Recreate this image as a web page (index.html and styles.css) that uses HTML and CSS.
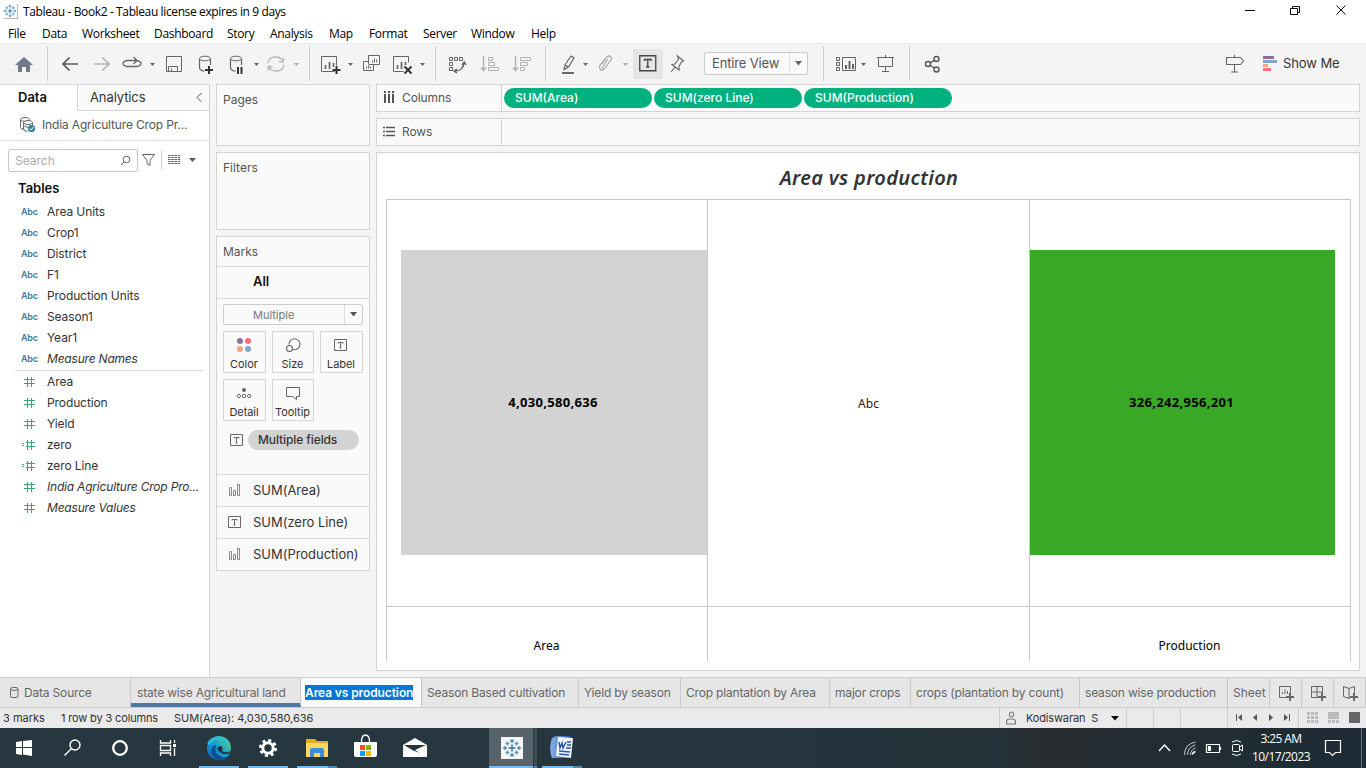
FILE: index.html
```html
<!DOCTYPE html>
<html lang="en">
<head>
<meta charset="utf-8">
<title>Tableau - Book2</title>
<link rel="stylesheet" href="styles.css">
</head>
<body>
<svg class="defs" width="0" height="0">
  <defs>
    <symbol id="tableau" viewBox="0 0 20 20"><g stroke-width="1.4"><path stroke="#2d739f" d="M10 6.500v7M6.500 10h7"/><path stroke="#4a8fbb" d="M10 1v4M8 3h4M10 15v4M8 17h4M3 8v4M1 10h4M17 8v4M15 10h4"/><path stroke="#5b9ac6" d="M5.500 3.500v4M3.500 5.500h4M14.500 3.500v4M12.500 5.500h4M5.500 12.500v4M3.500 14.500h4M14.500 12.500v4M12.500 14.500h4"/></g></symbol>
    <symbol id="hash" viewBox="0 0 14 12"><path d="M5.500 1v10M9.500 1v10M2 3.500h11M2 7.500h11" stroke="#3fa67a" stroke-width="1.100" fill="none"/></symbol>
    <symbol id="calc" viewBox="0 0 14 12"><path d="M5.500 1v10M9.500 1v10M4 3.500h9M4 7.500h9M-1 4.500h3M-1 6.500h3" stroke="#3fa67a" stroke-width="1.100" fill="none"/></symbol>
    <symbol id="tbox" viewBox="0 0 14 12"><path d="M.5.5h12v11H.5zM4 4.500V3.500h5v1M6.500 3.500v5.500M5.500 9h2" stroke="#666" fill="none"/></symbol>
    <symbol id="bars" viewBox="0 0 14 12"><path d="M1.500 3.500h2v8h-2zM5.500 6.500h2v5h-2zM9.500.5h2v11h-2z" stroke="#8a8a8a" fill="none"/></symbol>
  </defs>
</svg>
<div class="window">
  <header class="titlebar">
    <span class="appicon"><svg width="14" height="14"><use href="#tableau"/></svg></span>
    <span class="apptitle">Tableau - Book2 - Tableau license expires in 9 days</span>
    <svg class="winbtns" width="128" height="24" viewBox="1238 0 128 24"><path d="M1245 10.500h10M1290.500 8.500h7v6h-7zM1292.500 8V6.500h7v6h-2M1336.500 5.500l9 9M1345.500 5.500l-9 9" stroke="#000" fill="none"/></svg>
  </header>
  <nav class="menubar">
    <span class="m1">File</span><span class="m2">Data</span><span class="m3">Worksheet</span><span class="m4">Dashboard</span><span class="m5">Story</span><span class="m6">Analysis</span><span class="m7">Map</span><span class="m8">Format</span><span class="m9">Server</span><span class="m10">Window</span><span class="m11">Help</span>
  </nav>
  <div class="toolbar">
    <svg class="home" width="47" height="41" viewBox="0 43 47 41"><path d="M15 65l9-8 9 8h-3v7h-4v-5h-4v5h-4v-7z" fill="#6f7b8a"/></svg>
    <i class="sep"></i>
    <svg width="261" height="41" viewBox="48 43 261 41" fill="none" stroke="#666">
      <g class="back" stroke="#555" stroke-width="1.700"><path d="M78 64H63M69.500 57.500L63 64l6.500 6.500"/></g>
      <g stroke="#b5b5b5" stroke-width="1.700"><path d="M94 64h15M102.500 57.500L109 64l-6.500 6.500"/></g>
      <path stroke-width="1.300" d="M134 66.500h3q4-1 4-3t-4-3h-10q-4 1-4 3t4 3h7M133.500 57l3.500 3.500-3.500 3.500"/>
      <path d="M166.500 56.500h15v15h-15zM168.500 71v-4.500h9V71M171.500 71v-2.500"/>
      <path stroke-width="1.200" d="M199.500 59v9q1 3 5 3M210.500 59v6"/><ellipse cx="205" cy="58.500" rx="5.500" ry="2.300"/>
      <path stroke="#333" stroke-width="2" d="M209 66v8M205 70h8"/>
      <path stroke-width="1.200" d="M230.500 59v9q1 3 5 3M241.500 59v6"/><ellipse cx="236" cy="58.500" rx="5.500" ry="2.300"/>
      <path stroke="#333" stroke-width="2" d="M238 67v7M241.500 67v7"/>
      <path stroke="#b5b5b5" stroke-width="1.300" d="M268 63q1-6 7.500-6 5 0 7.500 4M284 65q-1 6-8 6-5 0-7.500-4M284 58l-1 4-4-.5M268 70.500l.5-4 4 .5"/>
      <path fill="#666" stroke="none" d="M150 63h5l-2.500 3zM254 63h5l-2.500 3z"/><path fill="#aaa" stroke="none" d="M294 63h5l-2.500 3z"/>
    </svg>
    <i class="sep"></i>
    <svg width="125" height="41" viewBox="310 43 125 41" fill="none" stroke="#666">
      <path d="M334.500 71.500h-13v-15h15v9"/><path stroke-width="1.700" d="M325.500 69v-4M329.500 69v-7M333.500 67v-4"/><path stroke="#333" stroke-width="2" d="M336.500 66v8M332.500 70h8"/>
      <path d="M368.500 55.500h11v9h-11zM368 61.500h-4.500v9h10v-5.500M372.500 62.500v-2M374.500 62.500v-4M376.500 62.500v-3M366.500 68.500v-2M368.500 68.500v-3M370.500 68.500v-2"/>
      <path d="M403.500 71.500h-10v-15h15v6"/><path stroke-width="1.700" d="M397.500 69v-4M401.500 69v-7M405.500 65v-3"/><path stroke="#333" stroke-width="2" d="M404.500 66.500l7 7M411.500 66.500l-7 7"/>
      <path fill="#666" stroke="none" d="M348 63h5l-2.500 3zM420 63h5l-2.500 3z"/>
    </svg>
    <i class="sep"></i>
    <svg width="109" height="41" viewBox="436 43 109 41" fill="none" stroke="#666">
      <path d="M449.500 57.500h3v3h-3zM454.500 57.500h3v3h-3zM459.500 57.500h3v3h-3zM449.500 62.500h3v3h-3zM449.500 67.500h3v3h-3z"/><path stroke-width="1.500" d="M455 71q8 0 9-8M462 65l2.300-3L466 65M457 69l-3 2 3 2"/>
      <g stroke="#b2b2b2"><path stroke-width="1.500" d="M483.500 56v14M481 67.500l2.500 3 2.500-3"/><path d="M488.500 57.500h4v3h-4zM488.500 62.500h6v3h-6zM488.500 67.500h10v3h-10z"/><path stroke-width="1.500" d="M515.500 56v14M513 67.500l2.500 3 2.500-3"/><path d="M520.500 57.500h10v3h-10zM520.500 62.500h7v3h-7zM520.500 67.500h4v3h-4z"/></g>
    </svg>
    <i class="sep"></i>
    <svg width="87" height="41" viewBox="546 43 87 41" fill="none" stroke="#666">
      <path stroke-width="1.200" d="M565 65l6-9 3 2-5.500 9-4.500 2.500zM565 65l3.500 2"/><path stroke-width="2" d="M562 73h12"/>
      <path stroke="#aaa" stroke-width="1.200" d="M602 64l5-7q2-2 4 0 1 1 0 3l-7 9q-2 2-4 0-1-2 0-4l6-7M602 68l6-9"/>
      <path fill="#666" stroke="none" d="M583 63h5l-2.500 3z"/><path fill="#aaa" stroke="none" d="M623 63h5l-2.500 3z"/>
    </svg>
    <span class="textbtn"><svg width="18" height="17"><path d="M.75.75h16v15h-16zM5.500 6V4.500h6.500V6M8.750 4.500v7.500M7 12h3.500" stroke="#444" stroke-width="1.300" fill="none"/></svg></span>
    <svg width="41" height="41" viewBox="663 43 41 41" fill="none" stroke="#666" stroke-width="1.100"><path d="M677.500 56l6 5-2 1-2.500 4.500v3.500l-7-5.500 3-.5 3.500-5zM675 67l-4 5"/></svg>
    <span class="combo"><b>Entire View</b><i><svg width="9" height="5"><path d="M1 0h7L4.500 4.500z" fill="#666"/></svg></i></span>
    <i class="sep fit"></i>
    <svg width="85" height="41" viewBox="824 43 85 41" fill="none" stroke="#666">
      <path d="M836.500 57.500h3v3h-3zM836.500 62.500h3v3h-3zM836.500 67.500h3v3h-3zM842.500 57.500h13v13h-13z"/><path stroke-width="2" d="M846 69v-4M849.500 69v-8M853 69v-5"/><path fill="#666" stroke="none" d="M861 63h5l-2.500 3z"/>
      <path d="M877 57.500h17M878.500 58v8.500h14V58M885.500 55v2M885.500 67v4.500M882 71.500h7"/>
    </svg>
    <i class="sep"></i>
    <svg class="share" width="60" height="41" viewBox="910 43 60 41" fill="none" stroke="#555" stroke-width="1.400"><circle cx="928" cy="64" r="2.500"/><circle cx="936.500" cy="59" r="2.500"/><circle cx="936.500" cy="69.500" r="2.500"/><path d="M930 63l4.500-2.700M930 65.500l4.500 2.500"/></svg>
    <svg class="guide" width="64" height="41" viewBox="1216 43 64 41" fill="none"><path stroke="#666" stroke-width="1.100" d="M1226.500 57.500h14l3 3.500-3 3.500h-14zM1234.500 55v2M1234.500 65v7M1231 72h7"/><path fill="#8b7098" d="M1263 56h11v3h-11z"/><path fill="#80a6cc" d="M1263 60h14v3h-14z"/><path fill="#f2a678" d="M1263 64h5v3h-5z"/><path fill="#f96e80" d="M1263 68h8v3h-8z"/></svg>
    <span class="showme">Show Me</span>
  </div>
  <main class="work">
    <aside class="datapane">
      <div class="panetabs"><b>Data</b><span class="ana">Analytics<svg width="8" height="12"><path d="M6.500 1L2 5.500 6.500 10" stroke="#555" fill="none"/></svg></span></div>
      <div class="source">
        <svg width="17" height="17" fill="none" stroke="#666"><ellipse cx="6" cy="3.500" rx="4.500" ry="2"/><path d="M1.500 3.500v8q1 2 4 2M4.500 6.500v7q1 2 4 2M13.500 7v2"/><ellipse cx="9" cy="6.500" rx="4.500" ry="2" fill="#fff"/><path d="M5 10q3 2 6 1"/><circle cx="12.500" cy="12.500" r="3.600" fill="#2f7fa5" stroke="none"/><path stroke="#fff" d="M10.500 12.500l1.500 1.500 2.500-3"/></svg>
        <span>India Agriculture Crop Pr...</span>
      </div>
      <div class="searchrow">
        <span class="search">Search<svg width="11" height="11"><path d="M1 10l3-3" stroke="#666"/><circle cx="6.500" cy="4.500" r="3.300" fill="none" stroke="#666"/></svg></span>
        <svg width="62" height="22" viewBox="138 149 62 22" fill="none" stroke="#666"><path d="M142.500 154.500h12l-4.500 6v5l-3-2v-3z"/><path stroke="#d0d0d0" d="M161.500 151v18"/><path stroke-dasharray="2.600 .6" d="M168 155.500h12.500M168 157.500h12.500M168 159.500h12.500M168 161.500h12.500M168 163.500h12.500"/><path fill="#555" stroke="none" d="M189 158h7l-3.500 4z"/></svg>
      </div>
      <h3 class="tables">Tables</h3>
      <ul class="fields">
        <li><em>Abc</em>Area Units</li><li><em>Abc</em>Crop1</li><li><em>Abc</em>District</li><li><em>Abc</em>F1</li><li><em>Abc</em>Production Units</li><li><em>Abc</em>Season1</li><li><em>Abc</em>Year1</li><li class="it"><em>Abc</em>Measure Names</li>
      </ul>
      <ul class="fields measures">
        <li><svg><use href="#hash"/></svg>Area</li><li><svg><use href="#hash"/></svg>Production</li><li><svg><use href="#hash"/></svg>Yield</li><li><svg><use href="#calc"/></svg>zero</li><li><svg><use href="#calc"/></svg>zero Line</li><li class="it"><svg><use href="#hash"/></svg>India Agriculture Crop Pro...</li><li class="it"><svg><use href="#hash"/></svg>Measure Values</li>
      </ul>
    </aside>
    <section class="cards">
      <div class="card pages">Pages</div>
      <div class="card filters">Filters</div>
      <div class="card marks">
        <div class="mhead">Marks</div>
        <div class="mall">All</div>
        <div class="mbody">
          <div class="msel"><span>Multiple</span><i><svg width="8" height="5"><path d="M0 0h7L3.500 4.500z" fill="#555"/></svg></i></div>
          <div class="mgrid">
            <div><svg width="16" height="16"><circle cx="4" cy="4" r="3" fill="#8b7098"/><circle cx="12" cy="4" r="3" fill="#f96e80"/><circle cx="4" cy="12" r="3" fill="#f2a678"/><circle cx="12" cy="12" r="3" fill="#80a6cc"/></svg>Color</div>
            <div><svg width="16" height="16" fill="none" stroke="#666" stroke-width="1.100"><path d="M4 7.500A5.500 5.500 0 1 1 8 12.500"/><circle cx="4.500" cy="11.500" r="3"/></svg>Size</div>
            <div><svg width="14" height="16" viewBox="0 -2 14 16"><use href="#tbox" width="14" height="12"/></svg>Label</div>
            <div><svg width="16" height="16" fill="none" stroke="#666"><circle cx="8" cy="5" r="2" fill="#666" stroke="none"/><circle cx="2.800" cy="11" r="1.700"/><circle cx="8" cy="11" r="1.700"/><circle cx="13.200" cy="11" r="1.700"/></svg>Detail</div>
            <div><svg width="16" height="16" fill="none" stroke="#666"><path d="M1.500 2.500h13v9h-3v3l-4-3h-6z"/></svg>Tooltip</div>
          </div>
          <div class="mfield"><svg width="14" height="12"><use href="#tbox"/></svg><span>Multiple fields</span></div>
        </div>
        <div class="mrow"><svg width="14" height="12"><use href="#bars"/></svg>SUM(Area)</div>
        <div class="mrow"><svg width="14" height="12"><use href="#tbox"/></svg>SUM(zero Line)</div>
        <div class="mrow"><svg width="14" height="12"><use href="#bars"/></svg>SUM(Production)</div>
      </div>
    </section>
    <section class="sheet">
      <div class="shelf"><div class="lab"><svg width="12" height="13"><path d="M2 0v2M6 0v2M10 0v2M2 3v9M6 3v9M10 3v9" stroke="#555" stroke-width="2"/></svg>Columns</div><span class="pill">SUM(Area)</span><span class="pill">SUM(zero Line)</span><span class="pill">SUM(Production)</span></div>
      <div class="shelf"><div class="lab"><svg width="12" height="13"><path d="M0 2.500h2M3 2.500h9M0 6.500h2M3 6.500h9M0 10.500h2M3 10.500h9" stroke="#555" stroke-width="1.700"/></svg>Rows</div></div>
      <div class="view">
        <h2>Area vs production</h2>
        <div class="chart">
          <div class="cell"><div class="sq grey">4,030,580,636</div></div>
          <div class="cell mid">Abc</div>
          <div class="cell"><div class="sq green">326,242,956,201</div></div>
          <div class="axis">Area</div><div class="axis"></div><div class="axis">Production</div>
        </div>
      </div>
    </section>
  </main>
  <div class="tabs">
    <span class="tab t0"><svg width="9" height="12" fill="none" stroke="#666"><rect x=".5" y=".5" width="7.500" height="10" rx="2"/><path d="M.5 2.500q3.700 2 7.500 0"/></svg>Data Source</span><span class="tab t1">state wise Agricultural land</span><span class="tab t2"><mark>Area vs production</mark></span><span class="tab t3">Season Based cultivation</span><span class="tab t4">Yield by season</span><span class="tab t5">Crop plantation by Area</span><span class="tab t6">major crops</span><span class="tab t7">crops (plantation by count)</span><span class="tab t8">season wise production</span><span class="tab t9">Sheet 9</span>
    <span class="tab add"><svg width="17" height="16" fill="none" stroke="#666"><path d="M9 12.500H1.500v-11h11V8M4.500 9V7M7 9V4.500M9.500 9V6"/><path stroke-width="2" d="M12 8v8M8 12h8"/></svg></span>
    <span class="tab add"><svg width="17" height="16" fill="none" stroke="#666"><path d="M9 12.500H1.500v-11h11V8M1.500 7h11M7 1.500v11"/><path stroke-width="2" d="M12 8v8M8 12h8"/></svg></span>
    <span class="tab add"><svg width="17" height="16" fill="none" stroke="#666"><path d="M9 12l-2 1.500-5.500-2v-10l5.500 2 5.500-2V8M7 3.500v10"/><path stroke-width="2" d="M12 8v8M8 12h8"/></svg></span>
  </div>
  <div class="status">
    <span class="s1">3 marks</span><span class="s2">1 row by 3 columns</span><span class="s3">SUM(Area): 4,030,580,636</span>
    <span class="user"><svg width="12" height="15" fill="none" stroke="#777" stroke-width="1.200"><rect x="3.500" y="1" width="4" height="5" rx="2"/><path d="M.5 13v-2q0-3 3-3h3q3 0 3 3v2z"/></svg><span>Kodiswaran&nbsp; S</span><svg class="ucaret" width="8" height="5"><path d="M0 0h8L4 4.500z"/></svg></span>
    <i class="c27"></i><i class="c27"></i><i class="c47"></i>
    <svg class="navs" width="138" height="20" viewBox="1228 708 138 20" fill="#555"><path d="M1236 714h1v7h-1zM1242 714v7l-4-3.500zM1257 714v7l-4-3.500zM1269 714v7l4-3.500zM1284 714v7l4-3.500zM1289 714h1v7h-1z"/><path fill="#ccc" d="M1298 708h1v20h-1z"/><path fill="#bbb" d="M1307 712h3v3h-3zM1311 712h3v3h-3zM1315 712h3v3h-3zM1307 716h3v3h-3zM1311 716h3v3h-3zM1315 716h3v3h-3zM1307 720h3v3h-3zM1311 720h3v3h-3zM1315 720h3v3h-3zM1328 712h11v7h-11zM1328 720h3v3h-3zM1332 720h3v3h-3zM1336 720h3v3h-3z"/><path fill="#666" d="M1349 712h11v11h-11z"/></svg>
  </div>
  <footer class="taskbar">
    <svg width="600" height="40" viewBox="0 728 600 40" fill="none">
      <defs><linearGradient id="edge" x1="0" y1="1" x2="1" y2="0"><stop offset="0" stop-color="#0c62b8"/><stop offset=".5" stop-color="#1b9ddb"/><stop offset="1" stop-color="#5fe05a"/></linearGradient><linearGradient id="word"><stop offset="0" stop-color="#87b1e6"/><stop offset="1" stop-color="#1f4fa8"/></linearGradient></defs>
      <path fill="#fff" d="M16 742l6-1v6h-6zM23 741l9-1v7h-9zM16 748h6v7l-6-1zM23 748h9v8l-9-1.500z"/>
      <g stroke="#fff" stroke-width="1.400"><circle cx="75" cy="745" r="5"/><path d="M71.500 748.500L64.500 755.500"/></g>
      <circle cx="120" cy="748" r="6.800" stroke="#fff" stroke-width="2.300"/>
      <path stroke="#fff" stroke-width="1.300" d="M160.500 740v3h10v-3M160.500 756v-3h10v3M160.500 745.500h10v5h-10zM174.500 740v3M174.500 748v8"/><path fill="#fff" d="M173 744h3v3h-3z"/>
      <circle cx="219" cy="748" r="12" fill="url(#edge)"/><path fill="#0b4f91" d="M216 745q-3 9 6 12 5 1 8-2-4 5-11 5-7-1-8-8 0-6 5-7z"/><path fill="#25353e" d="M218 747q2.500-2 4 0 1.500 2 0 4 4 2.500 8.500 0v2q-6 3-10.500-1-4-2-2-5z"/><path stroke="#2bc1d5" stroke-width="3" d="M208.500 744q3-6 10-6 7 1 9 6"/>
      <circle cx="268" cy="748" r="5.200" stroke="#fff" stroke-width="3"/><circle cx="268" cy="748" r="7.500" stroke="#fff" stroke-width="3" stroke-dasharray="3 2.890"/>
      <path fill="#e9a820" d="M306 739h9l2 2h11v16h-22z"/><path fill="#ffd766" d="M306 743h22v14h-22z"/><path fill="#3c8fd6" d="M310 757v-7q0-2 2-2h10q2 0 2 2v7h-4v-4h-6v4z"/>
      <path fill="#fff" d="M354 742h23v13q0 2-2 2h-19q-2 0-2-2z"/><path stroke="#fff" stroke-width="1.300" d="M361.500 742q0-7 4-7 4 0 4 7"/><path fill="#f25022" d="M360 745h5v5h-5z"/><path fill="#7fba00" d="M366 745h5v5h-5z"/><path fill="#00a4ef" d="M360 751h5v5h-5z"/><path fill="#ffb900" d="M366 751h5v5h-5z"/>
      <path fill="#fff" d="M403 745l12-7 12 7v12h-24z"/><path fill="#26363f" d="M404 745h22l-11 5 5 3-7-2.500z"/>
      <path fill="#56636a" d="M489 728h44v40h-44z"/><path fill="#3e4b51" d="M534 728h3v40h-3z"/><path fill="#f6f6f6" d="M501 737h22v22h-22z"/><svg x="502" y="738" width="20" height="20"><use href="#tableau"/></svg>
      <path fill="url(#word)" d="M551 741q1-5 7-5h13l-3 22h-16q-3-7-1-17z"/><path fill="#f2f6ff" d="M558 737l15 1-2 20-15-2z"/><path stroke="#2855ad" stroke-width="1.500" d="M559 742l1 6 2-5 1 5 3-6M567 742h4M567 745h4M566 748h5M559 751l11 1M559 754l10 1"/>
      <path fill="#76b9ed" d="M199 766h40v2h-40zM248 766h40v2h-40zM297 766h31v2h-31zM489 766h44v2h-44zM542 766h31v2h-31z"/><path fill="#5088b5" d="M328 766h9v2h-9zM534 766h3v2h-3zM573 766h9v2h-9z"/>
    </svg>
    <svg class="tray" width="94" height="40" viewBox="1152 728 94 40" fill="none" stroke="#fff"><path stroke-width="1.400" d="M1159 751l5.500-6 5.500 6"/><path stroke="#c4cbce" d="M1184.500 755q0-11 11-13M1187.500 755q0-8 8-10M1190.500 755q0-5 5-7"/><path stroke-width="1.600" d="M1192.500 754.500q0-2 3-3"/><path stroke-width="1.200" d="M1206.500 744.500h13v8h-13zM1220.500 747v3"/><path fill="#fff" stroke="none" d="M1208 746h3v5h-3z"/><rect x="1232.500" y="744.500" width="7" height="7" rx="1"/><path d="M1239.500 747l3-2v6l-3-2M1232 742q5-3 9 0M1232 754q5 3 9 0"/></svg>
    <div class="clock"><span>3:25 AM</span><span class="date">10/17/2023</span></div>
    <svg width="52" height="40" viewBox="1314 728 52 40" fill="none"><path stroke="#fff" stroke-width="1.200" d="M1325.500 740.500h15v12h-5l-3 3-3-3h-4z"/><path fill="#66757c" d="M1361 728h1v40h-1z"/></svg>
  </footer>
</div>
</body>
</html>
```
FILE: styles.css
```css
* { box-sizing: border-box; }
body { margin: 0; overflow: hidden; font-family: Inter, "Open Sans", sans-serif; font-size: 12px; color: #333; }
svg { display: block; flex: none; }
i, em { font-style: normal; }
.defs { display: none; }
.window { width: 1366px; height: 768px; display: flex; flex-direction: column; background: #f4f4f4; }
.window > * { flex: none; }
.titlebar { height: 24px; background: #fff; display: flex; align-items: center; padding-left: 3px; font-family: "Open Sans", sans-serif; color: #000; }
.appicon { width: 15px; height: 15px; border: 1px solid #bbb; border-top: 0; border-left: 0; margin-top: -1px; }
.apptitle { margin-left: 5px; letter-spacing: -.38px; margin-top: -1px; }
.winbtns { margin-left: auto; }
.menubar { height: 19px; background: #fff; display: flex; align-items: center; padding-left: 8px; font-family: "Open Sans", sans-serif; color: #000; letter-spacing: -.32px; }
.m1 { width: 34px; } .m2 { width: 40px; } .m3 { width: 72px; } .m4 { width: 73px; } .m5 { width: 43px; } .m6 { width: 59px; } .m7 { width: 40px; } .m8 { width: 54px; } .m9 { width: 48px; } .m10 { width: 60px; }
.toolbar { height: 41px; display: flex; align-items: center; background: #f4f4f4; box-shadow: inset 0 1px #eee; }
.sep { width: 1px; height: 35px; background: #d0d0d0; }
.textbtn { width: 30px; height: 30px; background: #e5e5e5; display: flex; align-items: center; justify-content: center; }
.combo { width: 104px; height: 23px; border: 1px solid #c8c8c8; border-radius: 2px; background: #fafafa; display: flex; font-size: 13px; color: #555; letter-spacing: -.15px; }
.combo b { width: 84px; font-weight: 400; line-height: 20px; padding-left: 7px; }
.combo i { border-left: 1px solid #ddd; flex: 1; display: flex; align-items: center; justify-content: center; }
.fit { margin-left: 15px; }
.guide { margin-left: 246px; }
.showme { font-size: 13px; margin-left: 3px; margin-top: -1px; letter-spacing: -.1px; }
.work { height: 593px; display: flex; }
.datapane { width: 210px; background: #fff; border-right: 1px solid #d0d0d0; display: flex; flex-direction: column; border-top: 1px solid #d5d5d5; }
.panetabs { height: 26px; display: flex; font-size: 13px; line-height: 25px; }
.panetabs b { width: 77px; padding-left: 18px; font-weight: 600; color: #111; font-size: 13px; }
.ana { flex: 1; border-left: 1px solid #d5d5d5; border-bottom: 1px solid #d5d5d5; background: #fafafa; padding: 0 6px 0 12px; display: flex; justify-content: space-between; align-items: center; letter-spacing: -.1px; }
.source { height: 30px; border-bottom: 1px solid #e2e2e2; display: flex; align-items: center; padding: 0 0 2px 19px; gap: 6px; color: #555; letter-spacing: -.15px; }
.searchrow { margin-top: 8px; padding-left: 8px; display: flex; }
.search { width: 130px; height: 23px; border: 1px solid #c8c8c8; border-radius: 2px; display: flex; align-items: center; justify-content: space-between; padding: 0 6px; color: #aaa; }
.tables { margin: 6px 0 0 18px; font-size: 13px; line-height: 20px; font-weight: 600; color: #111; }
.fields { list-style: none; margin: 3px 0 0; padding: 0; letter-spacing: -.1px; }
.fields li { height: 21px; line-height: 21px; display: flex; align-items: center; white-space: nowrap; }
.fields em { width: 26px; margin-left: 21px; color: #3b7c98; font: 600 9px Inter, sans-serif; letter-spacing: -.2px; }
.fields svg { width: 14px; height: 12px; margin: 0 12px 0 21px; overflow: visible; }
.fields .it { font-style: italic; letter-spacing: -.2px; }
.measures { margin: 1px 6px 0 15px; border-top: 1px solid #ddd; }
.measures svg { margin: 0 11px 0 7px; }
.cards { width: 166px; padding-left: 6px; display: flex; flex-direction: column; gap: 6px; }
.card { width: 154px; border: 1px solid #d4d4d4; background: #fafafa; color: #555; }
.pages { height: 62px; padding: 7px 6px; line-height: 15px; }
.filters { height: 78px; padding: 7px 6px; line-height: 15px; }
.marks { height: 335px; }
.mhead { height: 30px; line-height: 29px; padding-left: 6px; border-bottom: 1px solid #d8d8d8; }
.mall { height: 32px; line-height: 29px; padding-left: 36px; border-bottom: 1px solid #d8d8d8; font-weight: 600; font-size: 13px; color: #111; }
.mbody { height: 175px; padding: 5px 6px 0; }
.msel { height: 21px; border: 1px solid #ccc; display: flex; border-radius: 2px; color: #777; font-size: 11px; }
.msel span { flex: 1; line-height: 20px; padding-left: 29px; }
.msel i { width: 18px; border-left: 1px solid #ddd; display: flex; align-items: center; justify-content: center; }
.mgrid { margin-top: 6px; display: grid; grid-template-columns: 43px 42px 43px; gap: 6px; }
.mgrid div { height: 42px; border: 1px solid #d4d4d4; display: flex; flex-direction: column; align-items: center; padding: 5px 1px 0 0; gap: 4px; font-size: 11px; line-height: 14px; color: #333; letter-spacing: -.05px; }
.mfield { display: flex; align-items: center; margin-top: 9px; padding-left: 7px; gap: 4px; }
.mfield span { width: 111px; height: 20px; border-radius: 10px; background: #d3d3d3; color: #333; line-height: 20px; padding-left: 10px; font-weight: 500; letter-spacing: -.1px; }
.mrow { height: 32px; border-top: 1px solid #d8d8d8; display: flex; align-items: center; padding: 0 0 2px 11px; gap: 11px; font-size: 13px; color: #333; letter-spacing: -.03px; }
.sheet { width: 984px; display: flex; flex-direction: column; gap: 6px; }
.shelf { height: 28px; border: 1px solid #d4d4d4; background: #fafafa; display: flex; align-items: center; gap: 2px; }
.lab { width: 125px; height: 26px; border-right: 1px solid #d4d4d4; display: flex; align-items: center; padding: 0 0 1px 6px; gap: 7px; color: #555; letter-spacing: -.1px; }
.pill { width: 148px; height: 20px; border-radius: 10px; background: #00b180; color: #fff; padding-left: 11px; line-height: 20px; font-weight: 500; font-size: 12px; }
.view { height: 519px; background: #fff; border: 1px solid #d4d4d4; }
.view h2 { margin: 10px 0 6px; padding-left: 2px; text-align: center; font: italic 600 20px/30px "Noto Sans", sans-serif; letter-spacing: .32px; color: #333; }
.chart { margin-left: 9px; width: 965px; height: 462px; display: grid; grid-template-columns: 321px 322px 321px; grid-template-rows: 407px 54px; border-top: 1px solid #c8c8c8; border-left: 1px solid #c8c8c8; font-family: "Noto Sans", sans-serif; font-size: 12px; color: #222; }
.cell, .axis { border-right: 1px solid #c8c8c8; border-bottom: 1px solid #c8c8c8; }
.cell { display: flex; align-items: center; justify-content: center; }
.cell:first-child { justify-content: flex-end; }
.cell:nth-child(3) { justify-content: flex-start; }
.axis { border-bottom: 0; padding-right: 1px; text-align: center; line-height: 78px; height: 54px; color: #000; }
.sq { width: 306px; height: 305px; margin-bottom: 2px; padding-right: 2px; line-height: 304px; text-align: center; font-size: 13px; font-weight: 700; letter-spacing: .3px; color: #000; }
.grey { background: #d3d3d3; } .green { background: #3aa827; width: 305px; }
.tabs { height: 31px; display: flex; border-top: 1px solid #ccc; border-bottom: 1px solid #ccc; background: #e6e6e6; letter-spacing: -.18px; }
.tab { border-right: 1px solid #c8c8c8; padding-left: 6px; line-height: 29px; color: #666; white-space: nowrap; overflow: hidden; display: flex; }
.tab.t0 { width: 131px; align-items: center; gap: 5px; padding-left: 10px; } .t1 { width: 170px; border-bottom: 4px solid #4e79a0; } .tab.t2 { width: 121px; background: #fafafa; padding-left: 4px; } .tab.t3 { width: 157px; padding-left: 5px; } .tab.t4 { width: 102px; padding-left: 5px; } .tab.t5 { width: 149px; padding-left: 5px; } .tab.t6 { width: 81px; padding-left: 5px; } .tab.t7 { width: 169px; padding-left: 5px; } .tab.t8 { width: 148px; padding-left: 5px; } .tab.t9 { width: 42px; padding-left: 5px; letter-spacing: 0; }
.tab.add { width: 32px; padding: 0 0 0 8px; align-items: center; }
mark { background: #0078d7; color: #fff; font-weight: 600; height: 15px; line-height: 15px; margin-top: 7px; letter-spacing: -.1px; }
.status { height: 20px; display: flex; background: #eaeaea; line-height: 20px; font-size: 11px; }
.s1 { width: 61px; padding-left: 3px; } .s2 { width: 113px; letter-spacing: -.15px; } .s3 { width: 825px; letter-spacing: -.04px; }
.user { border-left: 1px solid #ccc; border-right: 1px solid #ccc; width: 128px; display: flex; padding-left: 6px; gap: 8px; align-items: center; white-space: nowrap; }
.user span { width: 71px; letter-spacing: -.15px; }
.ucaret { margin-left: 6px; }
.c27 { width: 27px; border-right: 1px solid #ccc; } .c47 { width: 47px; border-right: 1px solid #ccc; }
.taskbar { height: 40px; display: flex; background: linear-gradient(90deg, #26373f 0, #25363e 50%, #25323a 73%, #292c2d 77%, #222c32 82%, #1f2c35 100%); }
.tray { margin-left: 552px; }
.clock { width: 70px; margin-right: -2px; display: flex; flex-direction: column; align-items: center; color: #fff; font: 12px/18px "Open Sans", sans-serif; letter-spacing: -.58px; padding-top: 2px; }
```
